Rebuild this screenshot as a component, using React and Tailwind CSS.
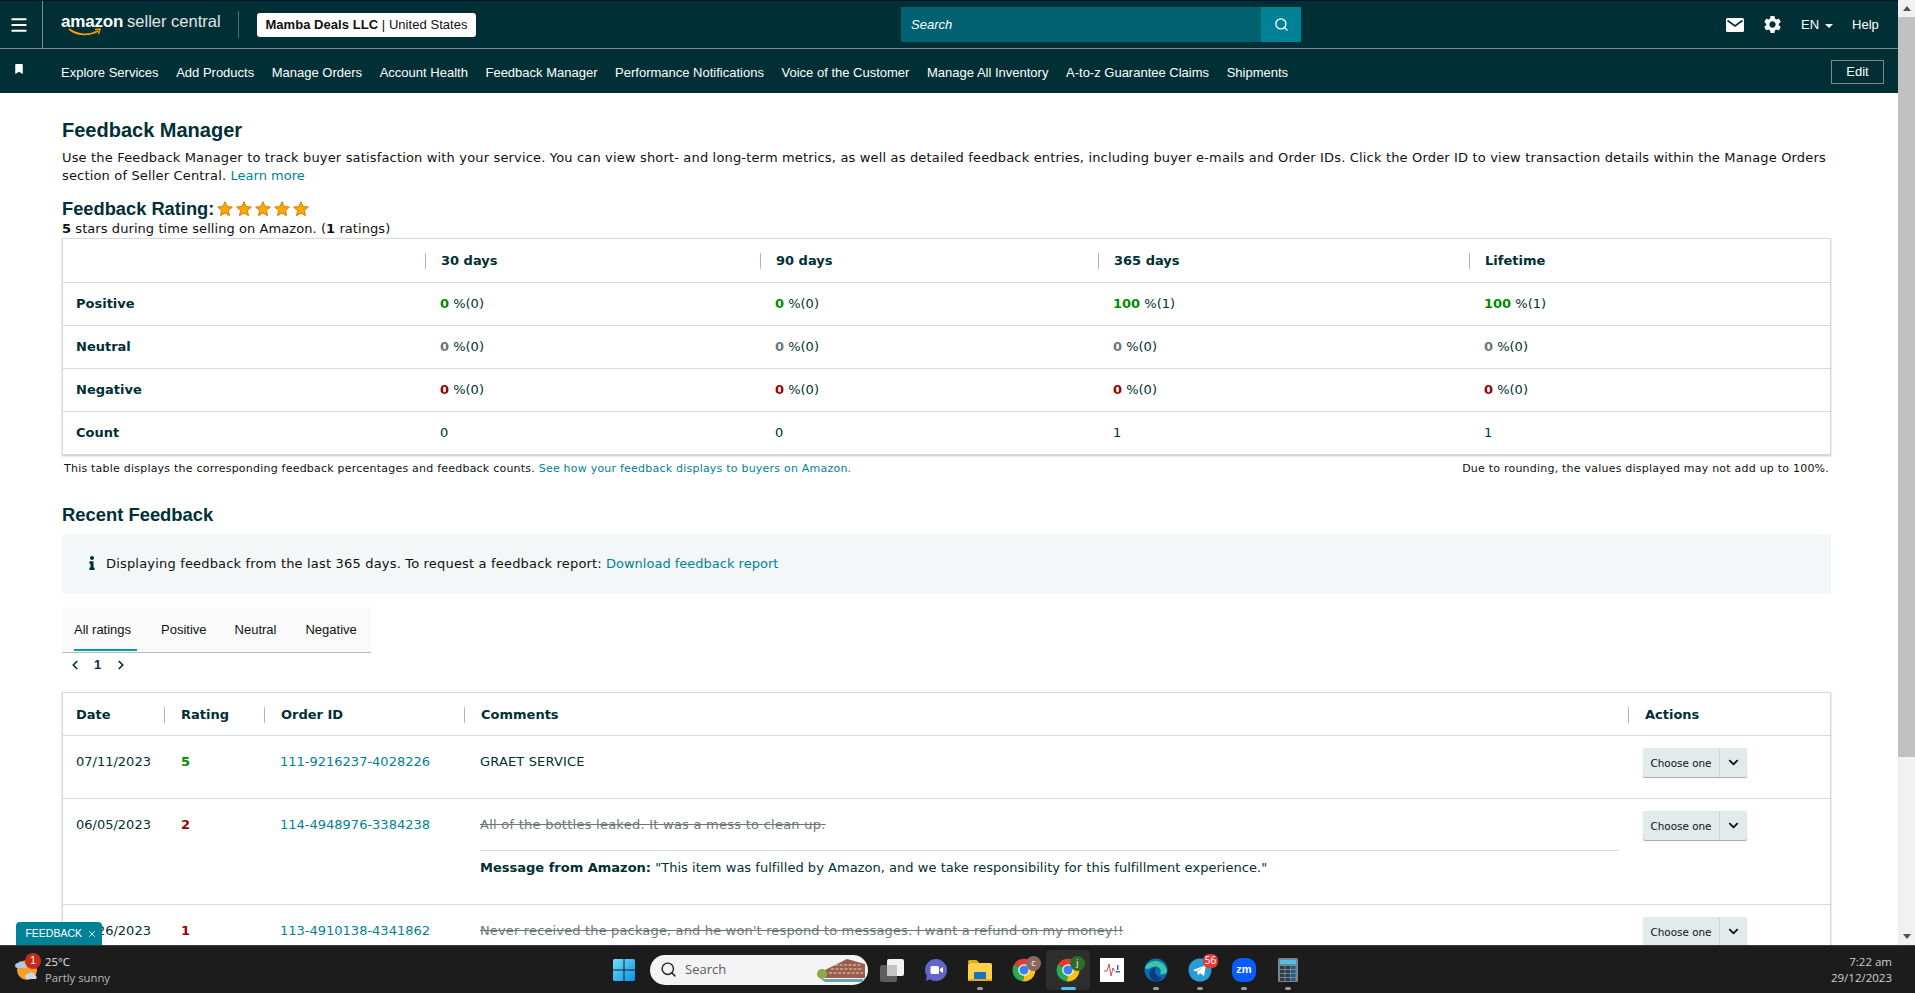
import { ChevronLeft, ChevronRight, Menu, Search, X } from 'lucide-react';
import { FaBookmark, FaChevronDown, FaInfo } from 'react-icons/fa';
import { MdSettings } from 'react-icons/md';

const NAV_ITEMS = [
  'Explore Services', 'Add Products', 'Manage Orders', 'Account Health', 'Feedback Manager',
  'Performance Notifications', 'Voice of the Customer', 'Manage All Inventory',
  'A-to-z Guarantee Claims', 'Shipments',
];

const SANS = "font-['Liberation_Sans',Arial,sans-serif]";
const BODY = "font-['DejaVu_Sans',Verdana,sans-serif]";

const SUMMARY_COLS = 'grid grid-cols-[362px_335px_338px_371px_363px]';
const FEEDBACK_COLS = 'grid grid-cols-[101px_100px_200px_1164px_204px]';

const SUMMARY_ROWS = [
  { label: 'Positive', color: 'text-[#008a00]', values: ['0', '0', '100', '100'], counts: [0, 0, 1, 1] },
  { label: 'Neutral', color: 'text-[#6c7778]', values: ['0', '0', '0', '0'], counts: [0, 0, 0, 0] },
  { label: 'Negative', color: 'text-[#990000]', values: ['0', '0', '0', '0'], counts: [0, 0, 0, 0] },
];

const Stars = () => (
  <span className="flex gap-[3px]">
    {[0, 1, 2, 3, 4].map((i) => (
      <svg key={i} width="16" height="16" viewBox="0 0 24 24">
        <path d="M12 1l3.200 7.300 7.800.8-5.900 5.200 1.700 7.700-6.800-4-6.800 4 1.700-7.700L1 9.100l7.800-.8z" fill="#ffa700" stroke="#c77a00" strokeWidth="1.400" />
      </svg>
    ))}
  </span>
);

const TopBar = () => (
  <div className={`flex h-[49px] items-center border-t border-b border-t-[#001233] border-b-[#7d8a8c] bg-[#002f36] text-white ${SANS}`}>
    <div className="flex h-full w-[43px] items-center border-r border-[#7d8a8c] pl-[9px]">
      <Menu size={20} strokeWidth={2.4} />
    </div>
    <div className="relative ml-[18px] w-[177px] whitespace-nowrap pb-[6px] leading-none">
      <span className="text-[17px] font-bold tracking-[-0.2px]">amazon</span>
      <span className="ml-[4px] text-[16.500px] text-[#e3e6e6]">seller central</span>
      <svg className="absolute left-[7px] top-[15px]" width="34" height="10" viewBox="0 0 34 10">
        <path d="M1 1c8 6.500 20 7 29 2" fill="none" stroke="#ff9900" strokeWidth="1.800" />
        <path d="M27 1.500l5-.5-1.500 5" fill="none" stroke="#ff9900" strokeWidth="1.500" />
      </svg>
    </div>
    <div className="h-[27px] w-px bg-[#5b6e72]" />
    <div className="ml-[18px] flex h-[24px] w-[219px] items-center justify-center rounded-[3px] bg-white text-[13px] tracking-[0.05px] text-[#0f1111]">
      <b>Mamba Deals LLC</b>&nbsp;| United States
    </div>
    <div className="ml-[425px] flex h-[35px] w-[400px]">
      <div className="flex flex-1 items-center bg-[#006170] pl-[10px] text-[13px] italic text-white">Search</div>
      <div className="flex w-[40px] items-center justify-center bg-[#008296]">
        <Search size={15} strokeWidth={2.2} />
      </div>
    </div>
    <svg className="ml-[425px]" width="18" height="14" viewBox="0 0 18 14">
      <rect width="18" height="14" rx="1.500" fill="#fff" />
      <path d="M1.500 2.500L9 8l7.500-5.500" fill="none" stroke="#002f36" strokeWidth="1.600" />
    </svg>
    <MdSettings className="ml-[18px]" size={21} />
    <span className="ml-[18px] flex items-center text-[13px]">
      EN
      <span className="ml-[6px] mt-[2px] h-0 w-0 border-x-[4px] border-t-[4px] border-x-transparent border-t-white" />
    </span>
    <span className="ml-[19px] text-[13px]">Help</span>
  </div>
);

const NavBar = () => (
  <div className={`flex h-[44px] items-center bg-[#002f36] pt-[2px] text-[13px] text-white ${SANS}`}>
    <FaBookmark className="ml-[14px] mb-[7px]" size={10} />
    <div className="ml-[37px] flex gap-[17.6px] pt-[1px]">
      {NAV_ITEMS.map((item) => (
        <span key={item}>{item}</span>
      ))}
    </div>
    <div className="ml-auto mr-[14px] flex h-[24px] w-[53px] items-center justify-center border border-[#7d8a8c]">Edit</div>
  </div>
);

const SummaryTable = () => (
  <div className="w-[1769px] border border-[#d5dbdb] shadow-[0_1px_2px_rgba(0,0,0,0.25)]">
    <div className={`${SUMMARY_COLS} h-[43px] items-center text-[13px] font-bold text-[#002f36]`}>
      <div />
      {['30 days', '90 days', '365 days', 'Lifetime'].map((h) => (
        <div key={h} className="flex h-[16px] items-center border-l border-[#a9b8b9] pl-[15px]">{h}</div>
      ))}
    </div>
    {SUMMARY_ROWS.map((row) => (
      <div key={row.label} className={`${SUMMARY_COLS} h-[43px] items-center border-t border-[#d5dbdb] text-[13px] text-[#002f36]`}>
        <div className="pl-[13px] font-bold">{row.label}</div>
        {row.values.map((v, i) => (
          <div key={i} className="pl-[15px]">
            <b className={row.color}>{v}</b> %({row.counts[i]})
          </div>
        ))}
      </div>
    ))}
    <div className={`${SUMMARY_COLS} h-[43px] items-center border-t border-[#d5dbdb] text-[13px] text-[#002f36]`}>
      <div className="pl-[13px] font-bold">Count</div>
      {[0, 0, 1, 1].map((v, i) => (
        <div key={i} className="pl-[15px]">{v}</div>
      ))}
    </div>
  </div>
);

const ActionSelect = () => (
  <div className={`flex h-[29px] w-[104px] rounded-[2px] bg-[#e3eaeb] text-[10.400px] text-[#0f1111] shadow-[0_1px_1px_rgba(0,0,0,0.35)] ${BODY}`}>
    <div className="flex w-[77px] items-center justify-center border-r border-[#cfd6d7] pt-[2px]">Choose one</div>
    <div className="flex flex-1 items-center justify-center">
      <FaChevronDown size={11} />
    </div>
  </div>
);

const FeedbackRow = ({ date, rating, ratingColor, orderId, children, height }) => (
  <div className={`${FEEDBACK_COLS} ${height} border-t border-[#d5dbdb] text-[13px] text-[#002f36]`}>
    <div className="pl-[13px] pt-[17px] leading-[18px]">{date}</div>
    <div className={`pl-[17px] pt-[17px] font-bold leading-[18px] ${ratingColor}`}>{rating}</div>
    <div className="pl-[16px] pt-[17px] leading-[18px] text-[#008296]">{orderId}</div>
    <div className="pl-[16px] pr-[10px] pt-[17px] leading-[18px]">{children}</div>
    <div className="pl-[15px] pt-[12px]"><ActionSelect /></div>
  </div>
);

const FeedbackTable = () => (
  <div className="w-[1769px] border border-[#d5dbdb] shadow-[0_1px_2px_rgba(0,0,0,0.25)]">
    <div className={`${FEEDBACK_COLS} h-[42px] items-center pt-[2px] text-[13px] font-bold text-[#002f36]`}>
      <div className="pl-[13px]">Date</div>
      {['Rating', 'Order ID', 'Comments', 'Actions'].map((h) => (
        <div key={h} className="flex h-[16px] items-center border-l border-[#a9b8b9] pl-[16px]">{h}</div>
      ))}
    </div>
    <FeedbackRow date="07/11/2023" rating="5" ratingColor="text-[#008a00]" orderId="111-9216237-4028226" height="h-[63px]">
      <span className="tracking-[0.15px]">GRAET SERVICE</span>
    </FeedbackRow>
    <FeedbackRow date="06/05/2023" rating="2" ratingColor="text-[#990000]" orderId="114-4948976-3384238" height="h-[106px]">
      <div className="border-b border-[#d5dbdb] pb-[16px] tracking-[0.25px] text-[#6c7778] line-through">All of the bottles leaked. It was a mess to clean up.</div>
      <div className="mt-[8px]">
        <b>Message from Amazon:</b> <span className="tracking-[0.03px]">"This item was fulfilled by Amazon, and we take responsibility for this fulfillment experience."</span>
      </div>
    </FeedbackRow>
    <FeedbackRow date="05/26/2023" rating="1" ratingColor="text-[#990000]" orderId="113-4910138-4341862" height="h-[63px]">
      <span className="tracking-[0.15px] text-[#6c7778] line-through">Never received the package, and he won't respond to messages. I want a refund on my money!!</span>
    </FeedbackRow>
  </div>
);

const Content = () => (
  <div className={`min-w-0 flex-1 overflow-hidden bg-white pl-[62px] text-[#002f36] ${BODY}`}>
    <h1 className={`mt-[24px] text-[20px] font-bold leading-[26px] ${SANS}`}>Feedback Manager</h1>
    <p className="mt-[6px] w-[1769px] text-[13px] leading-[18px] tracking-[0.164px] text-[#0f1111]">
      Use the Feedback Manager to track buyer satisfaction with your service. You can view short- and long-term metrics, as well as detailed feedback entries, including buyer e-mails and Order IDs. Click the Order ID to view transaction details within the Manage Orders section of Seller Central. <span className="tracking-normal text-[#008296]">Learn more</span>
    </p>
    <div className={`mt-[12px] flex h-[24px] items-center gap-[3px] text-[18.300px] font-bold ${SANS}`}>
      Feedback Rating: <Stars />
    </div>
    <p className="h-[16px] text-[13px] leading-[16px] tracking-[0.07px] text-[#0f1111]">
      <b>5</b> stars during time selling on Amazon. (<b>1</b> ratings)
    </p>
    <div className="mt-[1px]"><SummaryTable /></div>
    <div className="mt-[7px] flex w-[1769px] justify-between pl-[2px] pr-[2px] text-[11px] leading-[14px] tracking-[0.22px] text-[#0f1111]">
      <span>This table displays the corresponding feedback percentages and feedback counts. <span className="text-[#008296]">See how your feedback displays to buyers on Amazon.</span></span>
      <span>Due to rounding, the values displayed may not add up to 100%.</span>
    </div>
    <h2 className={`mt-[27px] text-[18.400px] font-bold leading-[24px] ${SANS}`}>Recent Feedback</h2>
    <div className="mt-[7px] flex h-[60px] w-[1769px] items-center bg-[#f3f7f7] pl-[23px] text-[13px] text-[#0f1111]">
      <FaInfo size={14} className="mr-[7px] mb-[2px] text-[#002f36]" />
      <span className="tracking-[0.18px]">Displaying feedback from the last 365 days. To request a feedback report:</span>&nbsp;<span className="text-[#008296]">Download feedback report</span>
    </div>
    <div className={`mt-[13px] flex h-[46px] w-[309px] border-b border-[#b8b8b8] bg-[#fafafa] pl-[12px] text-[13px] text-[#0f1111] ${SANS}`}>
      <div className="h-[44px] w-[63px] border-b-[2px] border-[#00a0ac] pt-[13px]">All ratings</div>
      <div className="ml-[24px] pt-[13px]">Positive</div>
      <div className="ml-[28px] pt-[13px]">Neutral</div>
      <div className="ml-[29px] pt-[13px]">Negative</div>
    </div>
    <div className={`flex h-[24px] items-center pl-[6px] text-[13px] font-bold ${SANS}`}>
      <ChevronLeft size={14} strokeWidth={3} />
      <span className="ml-[12px]">1</span>
      <ChevronRight className="ml-[13px]" size={14} strokeWidth={3} />
    </div>
    <div className="mt-[15px]"><FeedbackTable /></div>
  </div>
);

const Scrollbar = () => (
  <div className="flex w-[17px] shrink-0 flex-col items-center bg-[#f1f1f1]">
    <div className="flex h-[17px] w-full items-center justify-center">
      <span className="h-0 w-0 border-x-[4px] border-b-[5px] border-x-transparent border-b-[#505050]" />
    </div>
    <div className="h-[740px] w-full bg-[#c1c1c1]" />
    <div className="mt-auto flex h-[17px] w-full items-center justify-center">
      <span className="h-0 w-0 border-x-[4px] border-t-[5px] border-x-transparent border-t-[#505050]" />
    </div>
  </div>
);

const WindowsLogo = () => (
  <svg width="24" height="24" viewBox="0 0 24 24">
    <defs>
      <linearGradient id="win" x1="0" y1="0" x2="1" y2="1">
        <stop offset="0" stopColor="#6fe0fb" />
        <stop offset="1" stopColor="#0a8fe8" />
      </linearGradient>
    </defs>
    <path d="M1 2.500A1.500 1.500 0 0 1 2.500 1H11.500V11.500H1zM12.500 1H21.500A1.500 1.500 0 0 1 23 2.500V11.500H12.500zM1 12.500H11.500V23H2.500A1.500 1.500 0 0 1 1 21.500zM12.500 12.500H23V21.500A1.500 1.500 0 0 1 21.500 23H12.500z" fill="url(#win)" />
  </svg>
);

const TaskView = () => (
  <svg width="24" height="24" viewBox="0 0 24 24">
    <rect x="7" y="1" width="17" height="17" rx="2" fill="#f2f2f2" />
    <rect x="0" y="7" width="17" height="17" rx="2" fill="#5e5e5e" />
    <rect x="7" y="7" width="10" height="11" fill="#c4c4c4" />
  </svg>
);

const MeetIcon = () => (
  <svg width="24" height="24" viewBox="0 0 24 24">
    <path d="M12 1a11 11 0 1 1-6 20.200L2 23l.8-5A11 11 0 0 1 12 1z" fill="#6264c7" />
    <rect x="6.500" y="8" width="8.500" height="8" rx="1.500" fill="#fff" />
    <path d="M16 11l3-2v6l-3-2z" fill="#fff" />
  </svg>
);

const FolderIcon = () => (
  <svg width="24" height="24" viewBox="0 0 24 24">
    <path d="M0 3.500A1.500 1.500 0 0 1 1.500 2h7l3 3H0z" fill="#e8a90c" />
    <rect x="0" y="5" width="24" height="18" rx="1.500" fill="#ffd04a" />
    <rect x="6" y="14" width="12" height="9" rx="1" fill="#1573c4" />
    <rect x="0" y="21" width="24" height="2" fill="#e8a90c" />
  </svg>
);

const ChromeIcon = ({ badge, badgeColor }) => (
  <div className="relative h-[24px] w-[24px]">
    <svg width="24" height="24" viewBox="0 0 24 24">
      <path d="M12 12L2 6.500A11.500 11.500 0 0 1 22.500 7.500z" fill="#e33b2e" />
      <path d="M12 12l10.500-4.500A11.500 11.500 0 0 1 11 23.500z" fill="#fbc116" />
      <path d="M12 12l-1 11.500A11.500 11.500 0 0 1 2 6.500z" fill="#2da94f" />
      <circle cx="12" cy="12" r="5.800" fill="#fff" />
      <circle cx="12" cy="12" r="4.600" fill="#3b82f0" />
    </svg>
    <span className={`absolute -right-[5px] -top-[2px] flex h-[15px] w-[15px] items-center justify-center rounded-full text-[9px] text-white ${badgeColor}`}>{badge}</span>
  </div>
);

const PdfIcon = () => (
  <div className="flex h-[24px] w-[24px] items-center justify-center bg-white">
    <svg width="20" height="20" viewBox="0 0 20 20">
      <path d="M2 11h3l2-7 2 12 2-8 1.500 3" fill="none" stroke="#c9504e" strokeWidth="1" />
      <rect x="15" y="5" width="1.500" height="5" fill="#3467b5" />
      <rect x="13.500" y="11" width="4.500" height="1.500" fill="#3467b5" />
    </svg>
  </div>
);

const EdgeIcon = () => (
  <svg width="24" height="24" viewBox="0 0 24 24">
    <circle cx="12" cy="12" r="11.500" fill="#0c6cb8" />
    <path d="M1 10C3 2.500 18-2 23 12c.5 4-4 5-7 4 2-3 0-8-5-7.500C6 9 3 13 1 10z" fill="#36c8a2" />
    <path d="M12 23.500C7 23 4 18 6 13c1-2.500 4-4 6-3.500-2 2-1.500 9 6 10-2 2.500-4 4-6 4z" fill="#0b3e80" />
  </svg>
);

const TelegramIcon = () => (
  <div className="relative h-[24px] w-[24px]">
    <svg width="24" height="24" viewBox="0 0 24 24">
      <circle cx="12" cy="12" r="11.500" fill="#2a9bd5" />
      <path d="M5 12l13-5-2 11-4-3-2 2.500-.8-4L16 8l-8 5.500z" fill="#fff" />
    </svg>
    <span className="absolute -right-[6px] -top-[4px] flex h-[14px] w-[15px] items-center justify-center rounded-[6px] bg-[#e23b3b] text-[10px] text-white">56</span>
  </div>
);

const ZoomIcon = () => (
  <div className={`flex h-[24px] w-[24px] items-center justify-center rounded-[9px] bg-[#0b5cff] text-[11px] font-bold text-white ${SANS}`}>zm</div>
);

const CalcIcon = () => (
  <svg width="20" height="24" viewBox="0 0 20 24">
    <rect width="20" height="24" rx="1.500" fill="#77858f" />
    <rect x="2" y="2" width="16" height="4" fill="#4dc3e8" />
    {[8, 12, 16, 20].map((y) =>
      [2, 7.500, 13].map((x) => <rect key={`${x}-${y}`} x={x} y={y} width="4.500" height="3" fill={x === 13 ? '#245a86' : '#2b3a46'} />),
    )}
  </svg>
);

const WeatherIcon = () => (
  <svg width="26" height="28" viewBox="0 0 26 28">
    <circle cx="13" cy="14" r="10" fill="#f4a024" />
    <path d="M1 10a3 3 0 0 1 3-3 4 4 0 0 1 7 1 2.500 2.500 0 0 1 1 4H3a2.500 2.500 0 0 1-2-2z" fill="#b7c6e6" />
    <path d="M11 21a3 3 0 0 1 3-3 4 4 0 0 1 7 1 2.500 2.500 0 0 1 1 4h-9a2.500 2.500 0 0 1-2-2z" fill="#c9d6f2" />
  </svg>
);

const TaskSlot = ({ children, dot, active }) => (
  <div className={`relative flex h-[40px] w-[44px] items-center justify-center rounded-[4px] ${active ? 'bg-[#2e2e2e]' : ''}`}>
    {children}
    {dot && <span className="absolute bottom-0 h-[3px] w-[6px] rounded-full bg-[#9a9a9a]" />}
    {active && <span className="absolute bottom-0 h-[3px] w-[15px] rounded-full bg-[#4cc2ff]" />}
  </div>
);

const Taskbar = () => (
  <div className="relative flex h-[48px] shrink-0 items-center border-t border-[#3a3a3a] bg-[#1c1c1c] font-['Open_Sans',sans-serif] text-[#e6e6e6]">
    <div className="relative ml-[14px] h-[28px] w-[26px]">
      <WeatherIcon />
      <span className={`absolute -right-[1px] -top-[3px] flex h-[16px] w-[16px] items-center justify-center rounded-full bg-[#c42b1c] text-[10px] text-white ${SANS}`}>1</span>
    </div>
    <div className="ml-[5px] text-[11.300px] leading-[16px]">
      <div>25°C</div>
      <div className="text-[#bdbdbd]">Partly sunny</div>
    </div>
    <div className="ml-[502px]"><WindowsLogo /></div>
    <div className="ml-[14px] flex h-[30px] w-[218px] items-center rounded-full bg-[#f3f3f3] pl-[10px] text-[13px] text-[#5c5c5c]">
      <Search size={17} className="text-[#222]" />
      <span className="ml-[8px]">Search</span>
      <svg className="ml-auto mr-[1px]" width="52" height="28" viewBox="0 0 52 28">
        <path d="M10 14L32 3l18 5v14H10z" fill="#9a5e4b" />
        <path d="M14 17h34M16 13h32M20 9h26" stroke="#e2d6c8" strokeWidth="1.200" strokeDasharray="3 1.500" />
        <circle cx="7" cy="18" r="5" fill="#8eaa4a" />
        <path d="M6 23h42v3H10z" fill="#6aa3b5" />
      </svg>
    </div>
    <div className="ml-[2px] flex">
      <TaskSlot><TaskView /></TaskSlot>
      <TaskSlot><MeetIcon /></TaskSlot>
      <TaskSlot dot><FolderIcon /></TaskSlot>
      <TaskSlot><ChromeIcon badge="c" badgeColor="bg-[#8a6a5c]" /></TaskSlot>
      <TaskSlot active><ChromeIcon badge="j" badgeColor="bg-[#2f6b2a]" /></TaskSlot>
      <TaskSlot><PdfIcon /></TaskSlot>
      <TaskSlot dot><EdgeIcon /></TaskSlot>
      <TaskSlot dot><TelegramIcon /></TaskSlot>
      <TaskSlot dot><ZoomIcon /></TaskSlot>
      <TaskSlot dot><CalcIcon /></TaskSlot>
    </div>
    <div className="ml-auto mr-[23px] text-right text-[11.500px] leading-[16px] text-[#d0d0d0]">
      <div>7:22 am</div>
      <div>29/12/2023</div>
    </div>
  </div>
);

const App = () => (
  <div className="relative flex h-[993px] w-[1915px] flex-col overflow-hidden bg-white">
    <div className="flex min-h-0 flex-1">
      <div className="flex min-w-0 flex-1 flex-col">
        <TopBar />
        <NavBar />
        <Content />
      </div>
      <Scrollbar />
    </div>
    <Taskbar />
    {/* floating tab sits over the table */}
    <div className={`absolute left-[16px] top-[922px] flex h-[23px] w-[86px] items-center justify-end gap-[5px] rounded-t-[4px] bg-[#008296] pr-[5px] text-[10.500px] text-white ${SANS}`}>
      FEEDBACK
      <X size={10} strokeWidth={2} />
    </div>
  </div>
);

export default App;
